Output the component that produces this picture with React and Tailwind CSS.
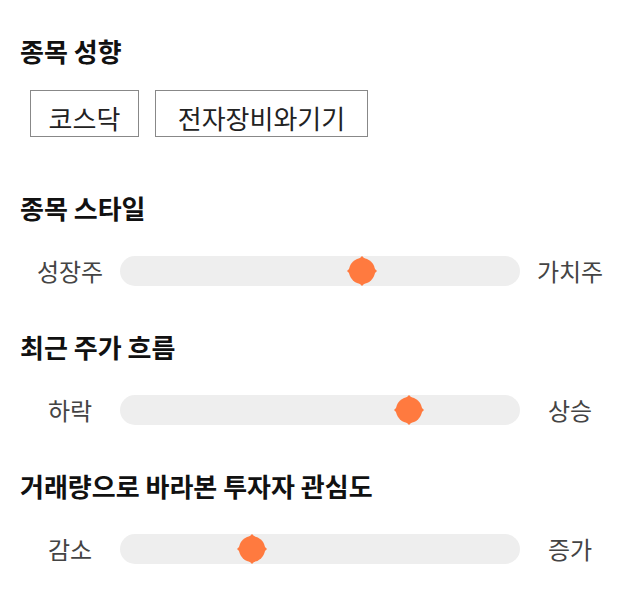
const font = { fontFamily: '"Noto Sans CJK KR", "Noto Sans", sans-serif' };

const sliders = [
  { title: '종목 스타일', left: '성장주', right: '가치주', pos: 362 },
  { title: '최근 주가 흐름', left: '하락', right: '상승', pos: 409 },
  { title: '거래량으로 바라본 투자자 관심도', left: '감소', right: '증가', pos: 252 },
];

function Thumb() {
  return (
    <svg width="30" height="30" viewBox="0 0 30 30">
      <circle cx="15" cy="15" r="13" fill="#ff7a3f" />
      <polygon points="15,0 30,15 15,30 0,15" fill="#ff7a3f" />
    </svg>
  );
}

function Slider({ left, right, pos }) {
  return (
    <div className="flex items-center h-[30px]">
      <div className="w-[100px] text-center text-[24px] leading-8 text-[#444]">{left}</div>
      <div className="relative w-[400px] h-[30px] rounded-full bg-[#eeeeee]">
        {/* thumb centre in page px, track starts at 120 */}
        <div className="absolute top-0" style={{ left: pos - 120 - 15 }}>
          <Thumb />
        </div>
      </div>
      <div className="w-[100px] text-center text-[24px] leading-8 text-[#444]">{right}</div>
    </div>
  );
}

export default function App() {
  return (
    <div className="w-[640px] h-[606px] bg-white px-5 pt-[35px]" style={font}>
      <h2 className="h-8 leading-8 text-[26px] font-bold text-[#111]">종목 성향</h2>
      <div className="flex gap-4 ml-[10px] mt-[23px]">
        <div className="h-[47px] w-[109px] pt-2 border border-[#888] flex items-center justify-center text-[26px] text-[#222]">코스닥</div>
        <div className="h-[47px] w-[213px] pt-2 border border-[#888] flex items-center justify-center text-[26px] text-[#222]">전자장비와기기</div>
      </div>
      {sliders.map((s, i) => (
        <div key={s.title} className={i === 0 ? 'mt-[55px]' : 'mt-[45px]'}>
          <h2 className="h-8 leading-8 text-[26px] font-bold text-[#111]">{s.title}</h2>
          <div className="mt-[32px]">
            <Slider {...s} />
          </div>
        </div>
      ))}
    </div>
  );
}
